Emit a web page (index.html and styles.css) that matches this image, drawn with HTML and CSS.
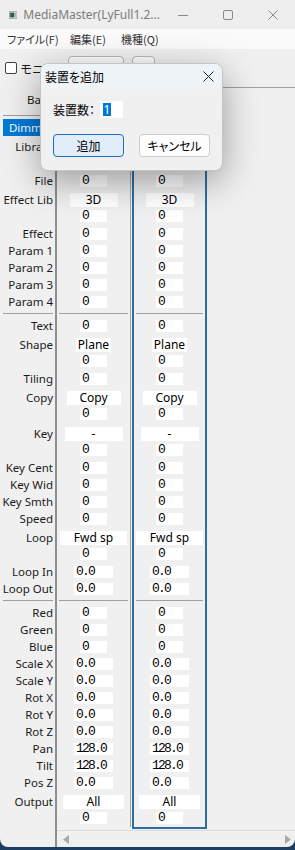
FILE: index.html
```html
<!DOCTYPE html>
<html lang="ja">
<head>
    <meta charset="UTF-8">
    <meta name="viewport" content="width=device-width, initial-scale=1.0">
    <title>MediaMaster</title>
    <link rel="stylesheet" href="styles.css">
</head>
<body>
    <div class="window">
        <div class="titlebar">
            <svg class="app-icon" width="14" height="12" viewBox="0 0 14 12">
                <rect x="0.5" y="0.5" width="13" height="11" fill="#e6e6e6" stroke="#808080"/>
                <rect x="2" y="2" width="7" height="8" fill="#2f5a4c"/>
                <rect x="10" y="2" width="2" height="8" fill="#a9b4b0"/>
            </svg>
            <span class="title">MediaMaster(LyFull1.2...</span>
            <div class="win-ctl">
                <span><svg width="10" height="10"><path d="M0 5.5H10" stroke="#8a8a8a"/></svg></span>
                <span><svg width="10" height="10"><rect x="0.5" y="0.5" width="9" height="9" rx="1.5" fill="none" stroke="#8a8a8a"/></svg></span>
                <span><svg width="10" height="10"><path d="M0.5 0.5L9.5 9.5M9.5 0.5L0.5 9.5" stroke="#8a8a8a"/></svg></span>
            </div>
        </div>

        <div class="menubar">
            <span class="menu-file">ファイル(F)</span>
            <span class="menu-edit">編集(E)</span>
            <span>機種(Q)</span>
        </div>

        <div class="toolbar">
            <label class="check"><span class="check-box"></span>モニタ</label>
            <button class="tbtn tbtn-wide"></button>
            <button class="tbtn tbtn-small"></button>
        </div>

        <div class="main">
            <!-- row labels -->
            <div class="labels">
                <div class="head">Base</div>
                <div class="sep"></div>
                <div class="lab selected">Dimmer</div>
                <div class="lab tall">Library</div>
                <div class="lab">File</div>
                <div class="lab tall">Effect Lib</div>
                <div class="lab">Effect</div>
                <div class="lab">Param 1</div>
                <div class="lab">Param 2</div>
                <div class="lab">Param 3</div>
                <div class="lab">Param 4</div>
                <div class="sep"></div>
                <div class="lab">Text</div>
                <div class="lab tall">Shape</div>
                <div class="lab">Tiling</div>
                <div class="lab tall">Copy</div>
                <div class="lab tall">Key</div>
                <div class="lab">Key Cent</div>
                <div class="lab">Key Wid</div>
                <div class="lab">Key Smth</div>
                <div class="lab">Speed</div>
                <div class="lab tall">Loop</div>
                <div class="lab">Loop In</div>
                <div class="lab">Loop Out</div>
                <div class="sep"></div>
                <div class="lab">Red</div>
                <div class="lab">Green</div>
                <div class="lab">Blue</div>
                <div class="lab">Scale X</div>
                <div class="lab">Scale Y</div>
                <div class="lab">Rot X</div>
                <div class="lab">Rot Y</div>
                <div class="lab">Rot Z</div>
                <div class="lab">Pan</div>
                <div class="lab">Tilt</div>
                <div class="lab">Pos Z</div>
                <div class="lab tall">Output</div>
            </div>

            <div class="right">
                <div class="cols">
                    <!-- device 1 -->
                    <div class="col col-a">
                        <div class="head"></div>
                        <div class="sep"></div>
                        <div class="row"><span class="val"></span></div>
                        <div class="block"><span class="cb cb-lib"></span><span class="val"></span></div>
                        <div class="row"><span class="val">0</span></div>
                        <div class="block"><span class="cb cb-lib">3D</span><span class="val">0</span></div>
                        <div class="row"><span class="val">0</span></div>
                        <div class="row"><span class="val">0</span></div>
                        <div class="row"><span class="val">0</span></div>
                        <div class="row"><span class="val">0</span></div>
                        <div class="row"><span class="val">0</span></div>
                        <div class="sep"></div>
                        <div class="row"><span class="val">0</span></div>
                        <div class="block"><span class="cb cb-shape">Plane</span><span class="val">0</span></div>
                        <div class="row"><span class="val">0</span></div>
                        <div class="block"><span class="cb cb-copy">Copy</span><span class="val">0</span></div>
                        <div class="block"><span class="cb cb-key">-</span><span class="val">0</span></div>
                        <div class="row"><span class="val">0</span></div>
                        <div class="row"><span class="val">0</span></div>
                        <div class="row"><span class="val">0</span></div>
                        <div class="row"><span class="val">0</span></div>
                        <div class="block"><span class="cb cb-loop">Fwd sp</span><span class="val">0</span></div>
                        <div class="row"><span class="val wide">0.0</span></div>
                        <div class="row"><span class="val wide">0.0</span></div>
                        <div class="sep"></div>
                        <div class="row"><span class="val">0</span></div>
                        <div class="row"><span class="val">0</span></div>
                        <div class="row"><span class="val">0</span></div>
                        <div class="row"><span class="val wide">0.0</span></div>
                        <div class="row"><span class="val wide">0.0</span></div>
                        <div class="row"><span class="val wide">0.0</span></div>
                        <div class="row"><span class="val wide">0.0</span></div>
                        <div class="row"><span class="val wide">0.0</span></div>
                        <div class="row"><span class="val wide">128.0</span></div>
                        <div class="row"><span class="val wide">128.0</span></div>
                        <div class="row"><span class="val wide">0.0</span></div>
                        <div class="block"><span class="cb cb-out">All</span><span class="val">0</span></div>
                    </div>

                    <!-- device 2 (selected) -->
                    <div class="col col-b">
                        <div class="head"></div>
                        <div class="sep"></div>
                        <div class="row"><span class="val"></span></div>
                        <div class="block"><span class="cb cb-lib"></span><span class="val"></span></div>
                        <div class="row"><span class="val">0</span></div>
                        <div class="block"><span class="cb cb-lib">3D</span><span class="val">0</span></div>
                        <div class="row"><span class="val">0</span></div>
                        <div class="row"><span class="val">0</span></div>
                        <div class="row"><span class="val">0</span></div>
                        <div class="row"><span class="val">0</span></div>
                        <div class="row"><span class="val">0</span></div>
                        <div class="sep"></div>
                        <div class="row"><span class="val">0</span></div>
                        <div class="block"><span class="cb cb-shape">Plane</span><span class="val">0</span></div>
                        <div class="row"><span class="val">0</span></div>
                        <div class="block"><span class="cb cb-copy">Copy</span><span class="val">0</span></div>
                        <div class="block"><span class="cb cb-key">-</span><span class="val">0</span></div>
                        <div class="row"><span class="val">0</span></div>
                        <div class="row"><span class="val">0</span></div>
                        <div class="row"><span class="val">0</span></div>
                        <div class="row"><span class="val">0</span></div>
                        <div class="block"><span class="cb cb-loop">Fwd sp</span><span class="val">0</span></div>
                        <div class="row"><span class="val wide">0.0</span></div>
                        <div class="row"><span class="val wide">0.0</span></div>
                        <div class="sep"></div>
                        <div class="row"><span class="val">0</span></div>
                        <div class="row"><span class="val">0</span></div>
                        <div class="row"><span class="val">0</span></div>
                        <div class="row"><span class="val wide">0.0</span></div>
                        <div class="row"><span class="val wide">0.0</span></div>
                        <div class="row"><span class="val wide">0.0</span></div>
                        <div class="row"><span class="val wide">0.0</span></div>
                        <div class="row"><span class="val wide">0.0</span></div>
                        <div class="row"><span class="val wide">128.0</span></div>
                        <div class="row"><span class="val wide">128.0</span></div>
                        <div class="row"><span class="val wide">0.0</span></div>
                        <div class="block"><span class="cb cb-out">All</span><span class="val">0</span></div>
                    </div>
                </div>

                <div class="hscroll">
                    <svg width="6" height="9"><path d="M6 0V9L0 4.5Z" fill="#a8a8a8"/></svg>
                    <svg width="6" height="9"><path d="M0 0V9L6 4.5Z" fill="#a8a8a8"/></svg>
                </div>
            </div>
        </div>
    </div>

    <!-- modal: add device -->
    <div class="dialog">
        <div class="dlg-title">
            <span>装置を追加</span>
            <span class="dlg-close"><svg width="11" height="11"><path d="M0.5 0.5L10.5 10.5M10.5 0.5L0.5 10.5" stroke="#222"/></svg></span>
        </div>
        <div class="dlg-body">
            <div class="dlg-field">
                <span class="dlg-label">装置数：</span>
                <span class="dlg-input"><span class="sel-text">1</span></span>
            </div>
            <div class="dlg-buttons">
                <button class="dbtn dbtn-default">追加</button>
                <button class="dbtn">キャンセル</button>
            </div>
        </div>
    </div>
</body>
</html>
```

FILE: styles.css
```css
body {
    margin: 0;
    background-color: #1c3f61;
    font-family: "Noto Sans", "Noto Sans CJK JP", sans-serif;
    font-size: 11.5px;
    color: #1a1a1a;
}
.window {
    width: 295px;
    height: 847px;
    background: #f0f0f0;
    border-radius: 0 0 8px 8px;
    overflow: hidden;
    display: flex;
    flex-direction: column;
}

/* title bar */
.titlebar {
    height: 29px;
    flex: none;
    display: flex;
    align-items: center;
    background: #eeeeee;
}
.app-icon {
    margin-left: 9px;
}
.title {
    flex: 1;
    margin-left: 6px;
    color: #7c7c7c;
    font-size: 12px;
    white-space: nowrap;
}
.win-ctl {
    display: flex;
}
.win-ctl span {
    width: 45px;
    display: flex;
    justify-content: center;
}

/* menu */
.menubar {
    height: 20px;
    flex: none;
    display: flex;
    align-items: center;
    padding-left: 7px;
    background: #fafafa;
    font-family: "Noto Sans CJK JP", sans-serif;
    font-feature-settings: "palt";
    font-size: 11px;
    color: #333;
}
.menu-file {
    width: 63px;
}
.menu-edit {
    width: 51px;
}

/* toolbar */
.toolbar {
    height: 38px;
    flex: none;
    display: flex;
    align-items: center;
    padding-left: 5px;
}
.check {
    width: 63px;
    display: flex;
    align-items: center;
    white-space: nowrap;
    font-family: "Noto Sans CJK JP", sans-serif;
    font-size: 12px;
}
.check-box {
    width: 10px;
    height: 10px;
    margin-right: 3px;
    border: 1px solid #444;
    border-radius: 2px;
    background: #fff;
}
.tbtn {
    height: 24px;
    margin: 0;
    padding: 0;
    border: 1px solid #b8b8b8;
    border-radius: 4px;
    background: #fbfbfb;
}
.tbtn-wide {
    width: 56px;
}
.tbtn-small {
    width: 23px;
    margin-left: 8px;
}

/* grid of devices */
.main {
    flex: 1;
    display: flex;
}
.labels {
    width: 55px;
    flex: none;
    border-right: 2px solid #8e8e8e;
}
.labels .head {
    height: 25px;
    line-height: 25px;
    text-align: right;
    padding-right: 2px;
}
.lab {
    height: 17px;
    line-height: 17px;
    text-align: right;
    padding-right: 2px;
    white-space: nowrap;
}
.lab.tall {
    height: 36px;
    box-sizing: border-box;
    padding-top: 4px;
    line-height: 14px;
}
.lab.selected {
    margin-left: 3px;
    background: #0078d7;
    color: #fff;
}
.sep {
    height: 7px;
    display: flex;
    align-items: center;
}
.sep::after {
    content: "";
    flex: 1;
    height: 1px;
    margin: 0 2px;
    background: #a0a0a0;
}
.labels .sep::after {
    margin: 0 2px 0 3px;
}

.right {
    flex: 1;
    display: flex;
    flex-direction: column;
}
.cols {
    flex: 1;
    display: flex;
    align-items: flex-start;
    border-top: 1px solid #a0a0a0;
}
.col {
    flex: none;
}
.col .head {
    height: 24px;
}
.col-a {
    width: 73px;
    border-right: 1px solid #a8a8a8;
}
.col-b {
    width: 71px;
    margin-left: 1px;
    border: 2px solid #2e6da4;
}
.col-b .head {
    height: 22px;
}
.row {
    height: 17px;
    display: flex;
    align-items: center;
    justify-content: center;
}
.block {
    height: 36px;
    box-sizing: border-box;
    padding-top: 4px;
    display: flex;
    flex-direction: column;
    align-items: center;
}
.val {
    width: 27px;
    height: 12px;
    box-sizing: border-box;
    padding-left: 2px;
    background: #fff;
    color: #000;
    font-family: "Liberation Mono", monospace;
    font-size: 13px;
    line-height: 12px;
    letter-spacing: -1.8px;
}
.val.wide {
    width: 39px;
}
.cb {
    height: 14px;
    line-height: 14px;
    background: #fff;
    color: #000;
    font-size: 12px;
    text-align: center;
}
.cb + .val {
    margin-top: 3px;
}
.cb-lib { width: 48px; }
.cb-shape { width: 35px; }
.cb-copy { width: 54px; }
.cb-key { width: 58px; }
.cb-loop { width: 67px; }
.cb-out { width: 61px; }

.hscroll {
    height: 17px;
    flex: none;
    box-sizing: border-box;
    border-top: 1px solid #dcdcdc;
    display: flex;
    align-items: center;
    justify-content: space-between;
    padding: 0 4px 0 6px;
}

/* dialog */
.dialog {
    position: absolute;
    left: 40px;
    top: 63px;
    width: 183px;
    height: 108px;
    box-sizing: border-box;
    background: #f0f0f0;
    border: 1px solid #c4c4c4;
    border-radius: 8px;
    box-shadow: 0 10px 36px rgba(0, 0, 0, 0.36);
    overflow: hidden;
    font-family: "Noto Sans CJK JP", sans-serif;
    font-feature-settings: "palt";
    font-size: 12px;
    color: #000;
}
.dlg-title {
    height: 25px;
    display: flex;
    align-items: center;
    padding-left: 4px;
    background: #eef3f8;
}
.dlg-close {
    margin-left: auto;
    width: 28px;
    display: flex;
    justify-content: center;
}
.dlg-body {
    padding: 12px 12px 0 12px;
}
.dlg-field {
    height: 17px;
    display: flex;
    align-items: center;
}
.dlg-label {
    width: 44px;
}
.dlg-input {
    width: 23px;
    height: 17px;
    margin-left: 3px;
    background: #fff;
    display: flex;
    align-items: center;
}
.sel-text {
    margin-left: 3px;
    width: 8px;
    height: 13px;
    line-height: 13px;
    background: #0078d7;
    color: #fff;
    font-family: "Noto Sans", sans-serif;
    text-align: center;
}
.dlg-buttons {
    display: flex;
    gap: 15px;
    margin-top: 16px;
}
.dbtn {
    width: 71px;
    height: 23px;
    padding: 0;
    border: 1px solid #cccccc;
    border-radius: 4px;
    background: #fdfdfd;
    font-family: inherit;
    font-feature-settings: "palt";
    font-size: 12px;
    color: #000;
}
.dbtn-default {
    border-color: #1f6fc0;
    background: #e1edf9;
}
```
